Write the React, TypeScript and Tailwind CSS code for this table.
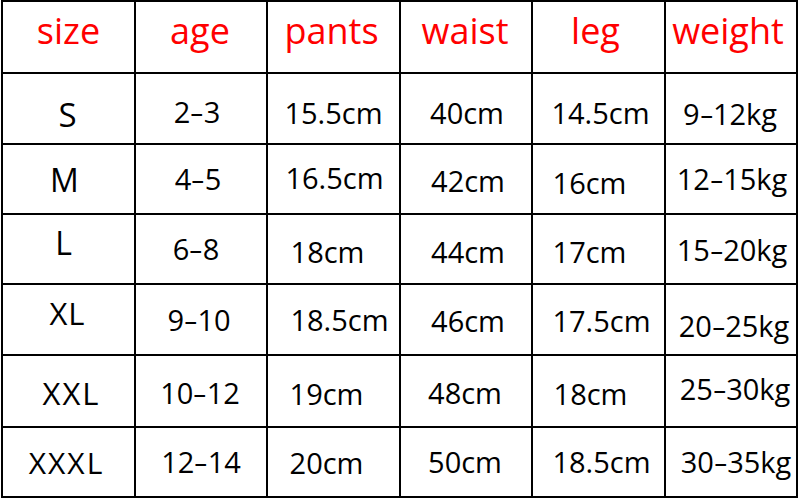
type Cell = { t: string; cls: string };

const header: Cell[] = [
  { t: "size", cls: "-translate-y-[6px]" },
  { t: "age", cls: "-translate-x-[1px] -translate-y-[6px]" },
  { t: "pants", cls: "-translate-x-[2px] -translate-y-[6px]" },
  { t: "waist", cls: "-translate-x-[1px] -translate-y-[6px]" },
  { t: "leg", cls: "-translate-x-[3px] -translate-y-[6px]" },
  { t: "weight", cls: "-translate-x-[3px] -translate-y-[6px]" },
];

// offsets follow the hand-placed text in the original chart
const rows: Cell[][] = [
  [
    { t: "S", cls: "text-[33px] -translate-x-[1px] translate-y-[6px]" },
    { t: "2-3", cls: "-translate-x-[4px] translate-y-[3px]" },
    { t: "15.5cm", cls: "translate-y-[4px]" },
    { t: "40cm", cls: "translate-x-[1px] translate-y-[4px]" },
    { t: "14.5cm", cls: "translate-x-[2px] translate-y-[4px]" },
    { t: "9-12kg", cls: "-translate-x-[1px] translate-y-[5px]" },
  ],
  [
    { t: "M", cls: "text-[32px] -translate-x-[4px] translate-y-[1px]" },
    { t: "4-5", cls: "-translate-x-[3px]" },
    { t: "16.5cm", cls: "translate-x-[1px] -translate-y-[1px]" },
    { t: "42cm", cls: "translate-x-[2px] translate-y-[2px]" },
    { t: "16cm", cls: "-translate-x-[9px] translate-y-[4px]" },
    { t: "12-15kg", cls: "translate-x-[1px]" },
  ],
  [
    { t: "L", cls: "text-[32px] -translate-x-[5px] -translate-y-[6px]" },
    { t: "6-8", cls: "-translate-x-[5px]" },
    { t: "18cm", cls: "-translate-x-[6px] translate-y-[3px]" },
    { t: "44cm", cls: "translate-x-[2px] translate-y-[3px]" },
    { t: "17cm", cls: "-translate-x-[9px] translate-y-[3px]" },
    { t: "15-20kg", cls: "translate-x-[1px] translate-y-[1px]" },
  ],
  [
    { t: "XL", cls: "text-[31px] tracking-[1px] -translate-x-[1px] -translate-y-[6px]" },
    { t: "9-10", cls: "-translate-x-[2px]" },
    { t: "18.5cm", cls: "translate-x-[6px]" },
    { t: "46cm", cls: "translate-x-[2px] translate-y-[1px]" },
    { t: "17.5cm", cls: "translate-x-[3px] translate-y-[1px]" },
    { t: "20-25kg", cls: "translate-x-[3px] translate-y-[6px]" },
  ],
  [
    { t: "XXL", cls: "text-[31px] tracking-[2px] translate-x-[3px] translate-y-[2px]" },
    { t: "10-12", cls: "-translate-x-[1px] translate-y-[2px]" },
    { t: "19cm", cls: "-translate-x-[7px] translate-y-[3px]" },
    { t: "48cm", cls: "-translate-x-[1px] translate-y-[2px]" },
    { t: "18cm", cls: "-translate-x-[8px] translate-y-[3px]" },
    { t: "25-30kg", cls: "translate-x-[4px] -translate-y-[2px]" },
  ],
  [
    { t: "XXXL", cls: "text-[30px] tracking-[2px] -translate-x-[2px]" },
    { t: "12-14", cls: "" },
    { t: "20cm", cls: "-translate-x-[7px] translate-y-[1px]" },
    { t: "50cm", cls: "-translate-x-[1px]" },
    { t: "18.5cm", cls: "translate-x-[3px]" },
    { t: "30-35kg", cls: "translate-x-[5px]" },
  ],
];

function Label({ text }: { text: string }) {
  const parts = text.split("-");
  return (
    <>
      {parts.map((p, i) => (
        <span key={i}>
          {i > 0 && <span className="inline-block scale-x-150 px-[2px] tracking-normal">-</span>}
          {p}
        </span>
      ))}
    </>
  );
}

export default function App() {
  return (
    <div
      className="min-h-[500px] w-[800px] bg-white"
      style={{ fontFamily: '"Open Sans", "Noto Sans", sans-serif' }}
    >
      <div className="ml-[1px] grid w-fit grid-cols-[131px_130px_131px_130px_131px_130px] grid-rows-[70px_69px_68px_68px_69px_70px_68px] gap-[2px] bg-black p-[2px]">
        {header.map((c) => (
          <div key={c.t} className="flex items-center justify-center bg-white">
            <span className={`whitespace-nowrap text-[36px] text-[#ff0000] ${c.cls}`}>{c.t}</span>
          </div>
        ))}
        {rows.map((row, r) =>
          row.map((c, i) => (
            <div key={`${r}-${i}`} className="flex items-center justify-center bg-white">
              <span className={`whitespace-nowrap text-[29px] text-black ${c.cls}`}>
                <Label text={c.t} />
              </span>
            </div>
          ))
        )}
      </div>
    </div>
  );
}
